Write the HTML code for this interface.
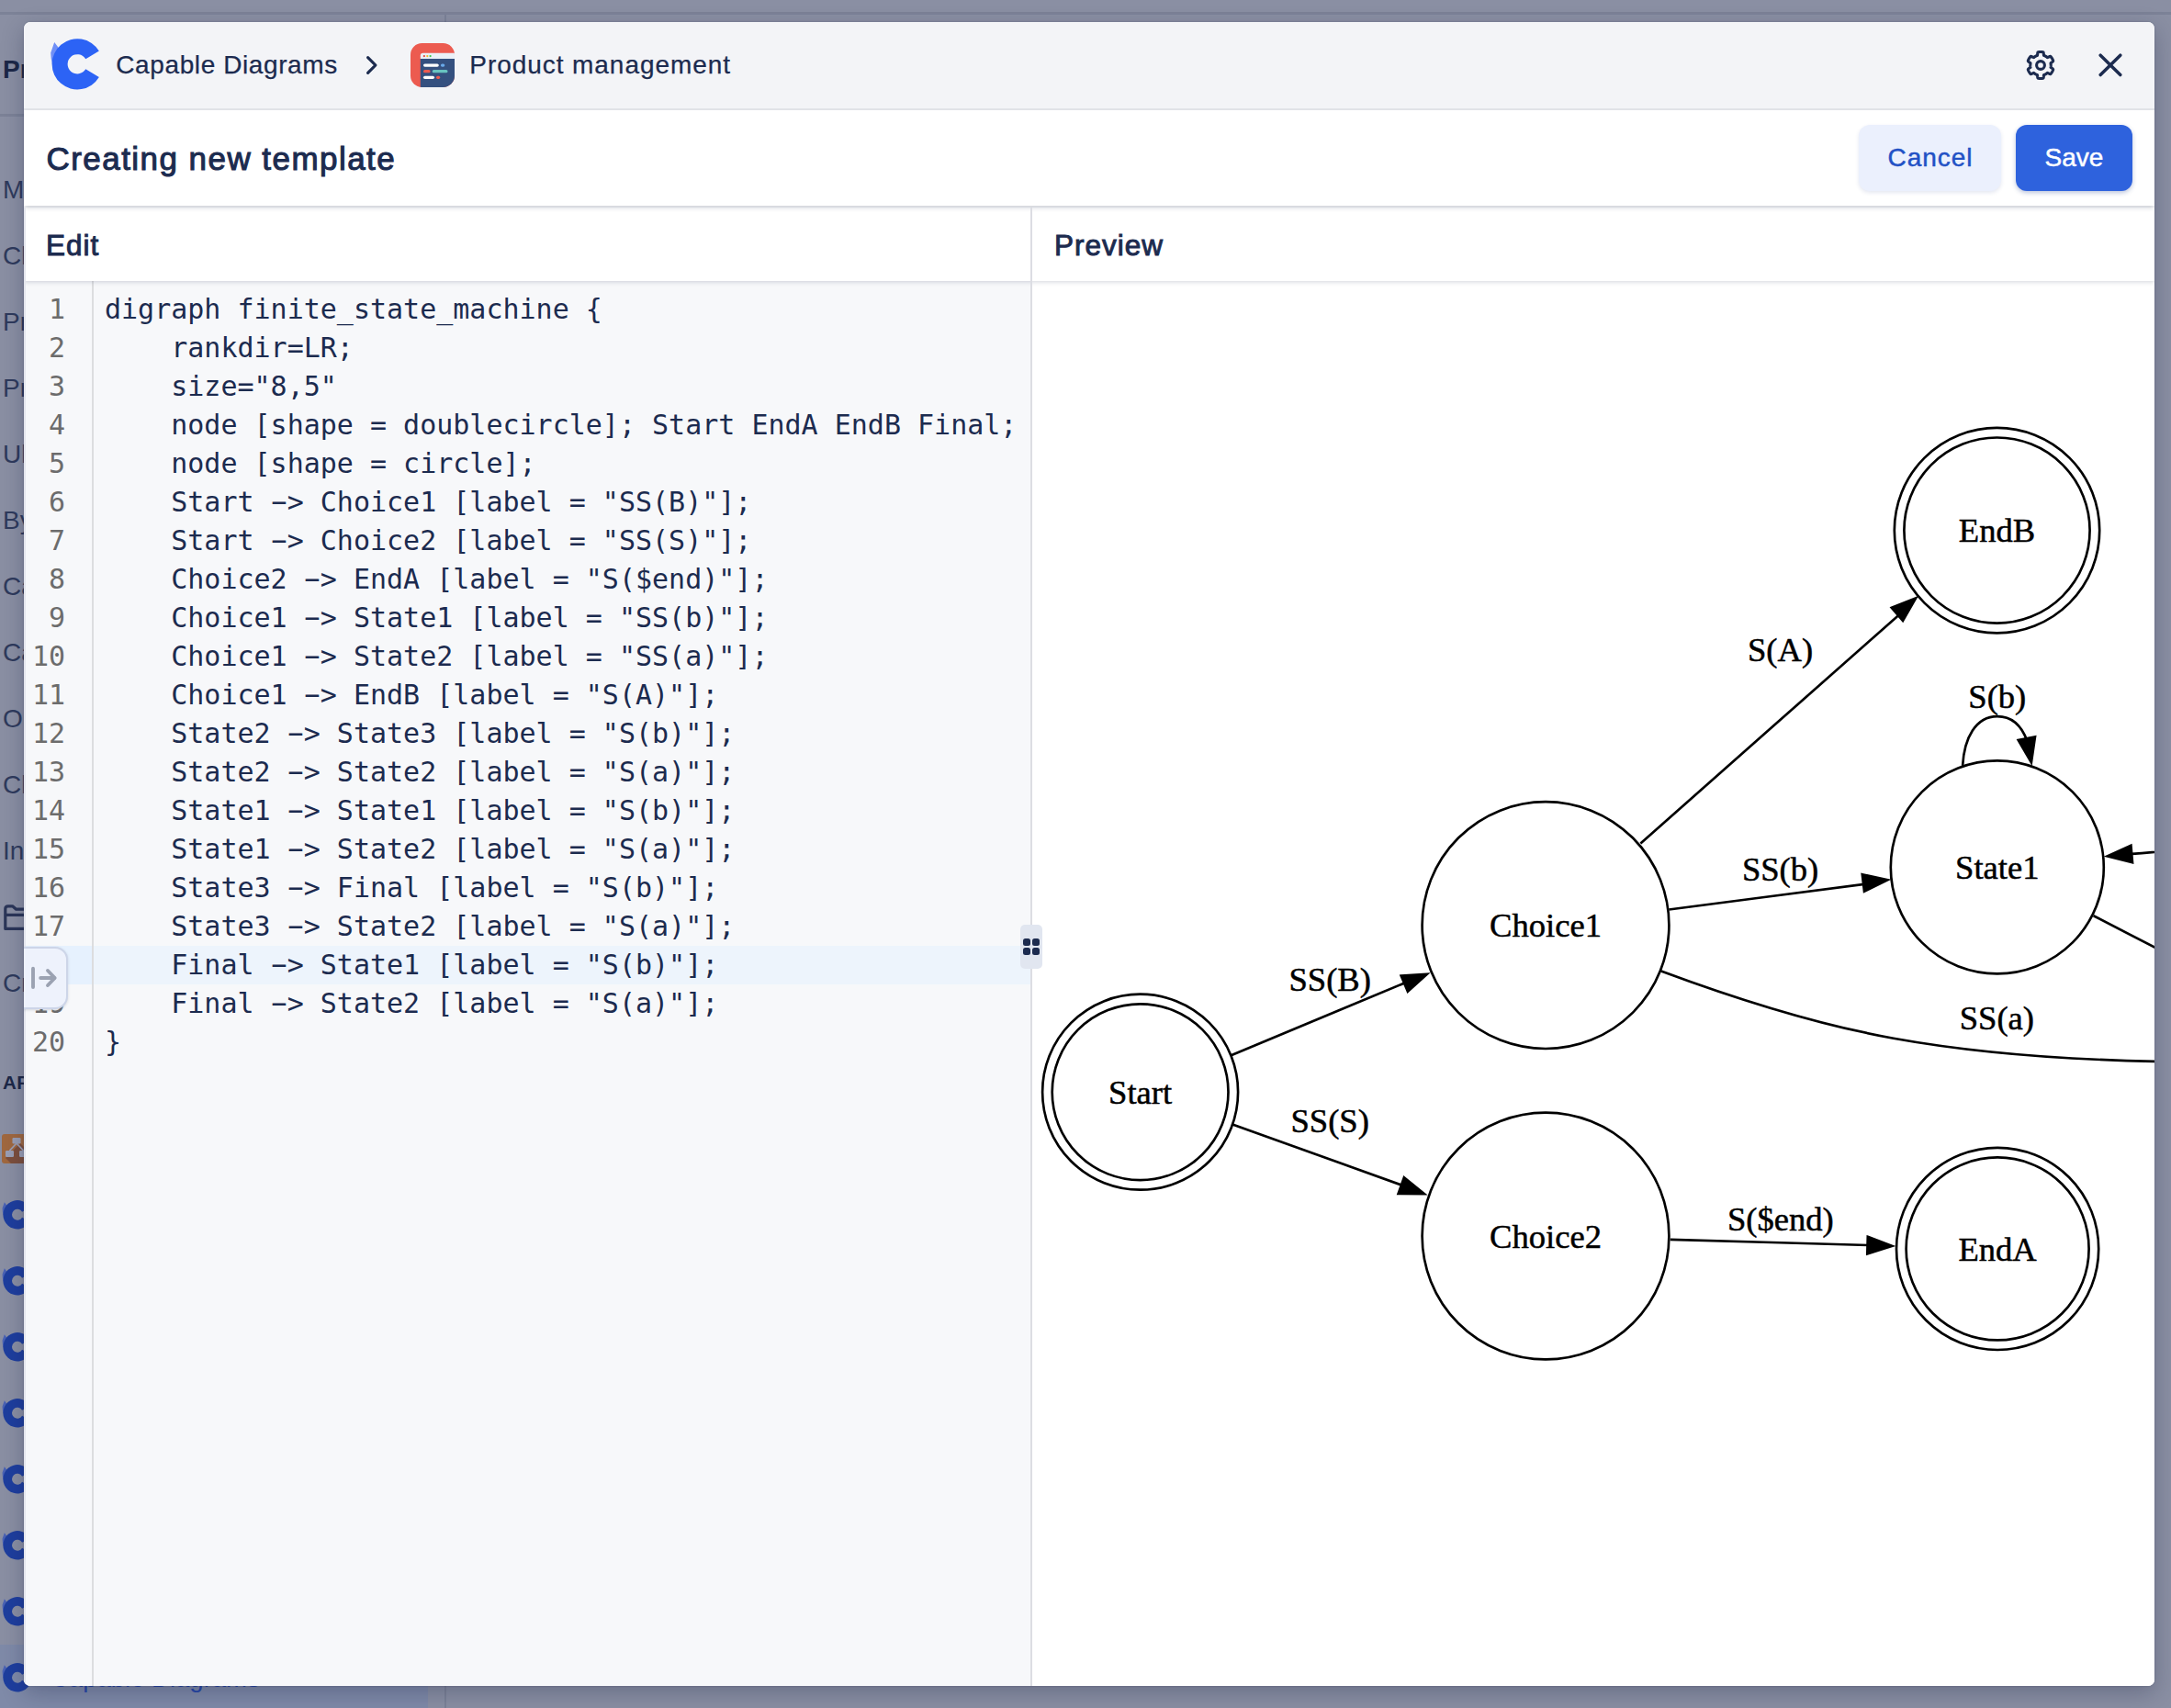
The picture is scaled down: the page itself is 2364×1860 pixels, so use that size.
<!DOCTYPE html>
<html lang="en">
<head>
<meta charset="utf-8">
<title>Capable Diagrams - Creating new template</title>
<style>
*{box-sizing:border-box;margin:0;padding:0}
html,body{width:2364px;height:1860px;overflow:hidden}
body{background:#8a8fa3;font-family:"Liberation Sans",sans-serif;color:#1c2b4f;position:relative}
.abs{position:absolute}
/* background (dimmed page) */
.bgline{position:absolute;background:#7c8297}
.side{position:absolute;left:3px;font-size:28px;color:#2e3a5c;white-space:nowrap;line-height:40px}
.side.b{font-weight:bold;color:#1c2747}
/* modal */
#modal{position:absolute;left:26px;top:24px;width:2320px;height:1812px;border-radius:7px;background:#fff;overflow:hidden;box-shadow:0 8px 24px rgba(20,30,60,.28),0 0 2px rgba(20,30,60,.3)}
#hdr{position:absolute;left:0;top:0;width:100%;height:96px;background:#f3f4f7;border-bottom:2px solid #e2e4e9}
#hdr .t{position:absolute;top:28px;font-size:28px;line-height:36px;color:#1c2b4f;white-space:nowrap;-webkit-text-stroke:.25px #1c2b4f}
#titlebar{position:absolute;left:0;top:96px;width:100%;height:104px;background:#fff;box-shadow:0 3px 5px -1px rgba(30,40,70,.2);z-index:3}
#titlebar h1{position:absolute;left:24.5px;top:30.7px;font-size:35px;line-height:44px;font-weight:normal;-webkit-text-stroke:1.05px #1c2b4f;color:#1c2b4f;white-space:nowrap;letter-spacing:1.45px}
.btn{position:absolute;top:16px;height:72px;border-radius:12px;font-size:28px;line-height:72px;text-align:center;-webkit-text-stroke:.45px currentColor}
#cancel{left:1998px;width:155px;letter-spacing:1px;text-indent:1px;background:#ebf0fd;color:#2251c5;box-shadow:0 2px 4px rgba(30,60,140,.12)}
#save{left:2169px;width:127px;background:#2e62dd;color:#fff;box-shadow:0 2px 5px rgba(30,60,140,.3)}
#panes{position:absolute;left:0;top:202px;width:100%;height:80px;background:#fff;box-shadow:0 1px 5px rgba(30,40,70,.2);z-index:2}
#panes .h{position:absolute;top:20.5px;font-size:31.5px;line-height:40px;font-weight:normal;-webkit-text-stroke:.95px #1c2b4f;letter-spacing:1px;color:#1c2b4f}
#editor{position:absolute;left:0;top:282px;width:1096px;height:1530px;background:#f7f8fa}
#gutter{position:absolute;left:0;top:0;width:76px;height:100%;border-right:2px solid #dcdddf}
#hl{position:absolute;left:0;top:724px;width:1096px;height:42px;background:#edf4fc}
#hlg{position:absolute;left:0;top:724px;width:74px;height:42px;background:#e6f1fe}
pre{font-family:"DejaVu Sans Mono","Liberation Mono",monospace;font-size:30px;line-height:42px}
.hy{display:inline-block;transform:translateY(-1.5px) scaleX(1.9)}
#nums{position:absolute;left:0;top:10px;width:45px;text-align:right;color:#6c6c6c}
#code{position:absolute;left:88px;top:10px;color:#1c2b4f}
#divider{position:absolute;left:1096px;top:202px;width:2px;height:1610px;background:#dcdde3;z-index:4}
#handle{position:absolute;left:1085px;top:983px;width:24px;height:48px;border-radius:5px;background:#e1e6f0;z-index:5}
#handle i{position:absolute;width:8px;height:8px;border-radius:2.5px;background:#1c2b4f}
#tab{position:absolute;left:-2px;top:1006.8px;width:49.7px;height:68px;border:2px solid #cdd5e8;border-radius:0 14px 14px 0;background:#eef2fc;z-index:6;box-shadow:0 1px 3px rgba(30,40,70,.15)}
#preview{position:absolute;left:1098px;top:282px;width:1222px;height:1530px;background:#fff;overflow:hidden}
</style>
</head>
<body>
<!-- dimmed background page -->
<div class="bgline" style="left:0;top:13px;width:2364px;height:3px"></div>
<div class="bgline" style="left:0;top:124px;width:30px;height:3px"></div>
<div class="bgline" style="left:484px;top:16px;width:2px;height:20px"></div>
<div class="abs" style="left:0;top:1791px;width:466px;height:69px;background:#7f8aa8"></div>
<div class="bgline" style="left:484px;top:1836px;width:2px;height:24px"></div>
<svg class="abs" style="left:3.3px;top:1307.0px;overflow:visible" width="34" height="34" viewBox="0 0 60 60"><path d="M3.2,4.1 L7.4,9.4 L9,13 L5,19 L2.5,24 L1.2,29 L-0.3,22 L-0.8,15.6 Z" fill="#4a62b4"/><path d="M51.86,42.02A27.6,27.6 0 1 1 51.86,13.58L37.29,22.34A10.6,10.6 0 1 0 37.29,33.26Z" fill="#1e3e9e"/></svg>
<svg class="abs" style="left:3.3px;top:1379.0px;overflow:visible" width="34" height="34" viewBox="0 0 60 60"><path d="M3.2,4.1 L7.4,9.4 L9,13 L5,19 L2.5,24 L1.2,29 L-0.3,22 L-0.8,15.6 Z" fill="#4a62b4"/><path d="M51.86,42.02A27.6,27.6 0 1 1 51.86,13.58L37.29,22.34A10.6,10.6 0 1 0 37.29,33.26Z" fill="#1e3e9e"/></svg>
<svg class="abs" style="left:3.3px;top:1451.0px;overflow:visible" width="34" height="34" viewBox="0 0 60 60"><path d="M3.2,4.1 L7.4,9.4 L9,13 L5,19 L2.5,24 L1.2,29 L-0.3,22 L-0.8,15.6 Z" fill="#4a62b4"/><path d="M51.86,42.02A27.6,27.6 0 1 1 51.86,13.58L37.29,22.34A10.6,10.6 0 1 0 37.29,33.26Z" fill="#1e3e9e"/></svg>
<svg class="abs" style="left:3.3px;top:1523.0px;overflow:visible" width="34" height="34" viewBox="0 0 60 60"><path d="M3.2,4.1 L7.4,9.4 L9,13 L5,19 L2.5,24 L1.2,29 L-0.3,22 L-0.8,15.6 Z" fill="#4a62b4"/><path d="M51.86,42.02A27.6,27.6 0 1 1 51.86,13.58L37.29,22.34A10.6,10.6 0 1 0 37.29,33.26Z" fill="#1e3e9e"/></svg>
<svg class="abs" style="left:3.3px;top:1595.0px;overflow:visible" width="34" height="34" viewBox="0 0 60 60"><path d="M3.2,4.1 L7.4,9.4 L9,13 L5,19 L2.5,24 L1.2,29 L-0.3,22 L-0.8,15.6 Z" fill="#4a62b4"/><path d="M51.86,42.02A27.6,27.6 0 1 1 51.86,13.58L37.29,22.34A10.6,10.6 0 1 0 37.29,33.26Z" fill="#1e3e9e"/></svg>
<svg class="abs" style="left:3.3px;top:1667.0px;overflow:visible" width="34" height="34" viewBox="0 0 60 60"><path d="M3.2,4.1 L7.4,9.4 L9,13 L5,19 L2.5,24 L1.2,29 L-0.3,22 L-0.8,15.6 Z" fill="#4a62b4"/><path d="M51.86,42.02A27.6,27.6 0 1 1 51.86,13.58L37.29,22.34A10.6,10.6 0 1 0 37.29,33.26Z" fill="#1e3e9e"/></svg>
<svg class="abs" style="left:3.3px;top:1739.0px;overflow:visible" width="34" height="34" viewBox="0 0 60 60"><path d="M3.2,4.1 L7.4,9.4 L9,13 L5,19 L2.5,24 L1.2,29 L-0.3,22 L-0.8,15.6 Z" fill="#4a62b4"/><path d="M51.86,42.02A27.6,27.6 0 1 1 51.86,13.58L37.29,22.34A10.6,10.6 0 1 0 37.29,33.26Z" fill="#1e3e9e"/></svg>
<svg class="abs" style="left:3.3px;top:1811.0px;overflow:visible" width="34" height="34" viewBox="0 0 60 60"><path d="M3.2,4.1 L7.4,9.4 L9,13 L5,19 L2.5,24 L1.2,29 L-0.3,22 L-0.8,15.6 Z" fill="#4a62b4"/><path d="M51.86,42.02A27.6,27.6 0 1 1 51.86,13.58L37.29,22.34A10.6,10.6 0 1 0 37.29,33.26Z" fill="#1e3e9e"/></svg>
<svg class="abs" style="left:0;top:980px" width="40" height="40" viewBox="0 980 40 40" fill="none" stroke="#2a3558" stroke-width="3.2" stroke-linejoin="round"><path d="M5.8,1011.4 L5.8,989.8 Q5.8,986.8 8.8,986.8 L13.6,986.8 L17.6,990.2 L34,990.2 L34,1011.4 Z M5.8,996.3 L34,996.3"/></svg>
<div class="abs" style="left:2px;top:1235px;width:34px;height:32px;border-radius:3px;background:#a0683f;overflow:hidden"><svg width="34" height="32" viewBox="0 0 34 32"><path d="M4,26 L12,18 L20,10 L34,24 L34,32 L10,32Z" fill="#7d4f3c"/><g fill="#9a9fb5"><rect x="11.5" y="4" width="9" height="6.5" rx="1.2"/><rect x="4" y="18" width="9" height="7" rx="1.2"/><rect x="19" y="18" width="9" height="7" rx="1.2"/></g><path d="M16,10 L8.5,18 M16,10 L23.5,18" stroke="#9a9fb5" stroke-width="1.8" fill="none"/></svg></div>
<div class="side b" style="top:56px">Pr</div>
<div class="side" style="top:187px">M</div>
<div class="side" style="top:259px">Cl</div>
<div class="side" style="top:331px">Pr</div>
<div class="side" style="top:403px">Pr</div>
<div class="side" style="top:475px">Ul</div>
<div class="side" style="top:547px">By</div>
<div class="side" style="top:619px">Ca</div>
<div class="side" style="top:691px">Ca</div>
<div class="side" style="top:763px">Ou</div>
<div class="side" style="top:835px">Cl</div>
<div class="side" style="top:907px">In</div>
<div class="side" style="top:1051px">Cr</div>
<div class="side b" style="top:1158.5px;font-size:20.5px;left:3px;letter-spacing:.5px">AP</div>
<div class="side" style="top:1807.5px;left:55px;color:#2747a8;font-size:27.5px">Capable Diagrams</div>

<div id="modal">
  <div id="hdr">
    <svg class="abs" style="left:30px;top:18px;overflow:visible" width="60" height="60" viewBox="0 0 60 60"><path d="M3.2,4.1 L7.4,9.4 L9,13 L5,19 L2.5,24 L1.2,29 L-0.3,22 L-0.8,15.6 Z" fill="#6f8ff6"/><path d="M51.86,42.02A27.6,27.6 0 1 1 51.86,13.58L37.29,22.34A10.6,10.6 0 1 0 37.29,33.26Z" fill="#2c63f5"/></svg>
    <svg class="abs" style="left:366px;top:30px" width="24" height="34" viewBox="366 30 24 34"><polyline points="374.6,38.6 382.9,47 374.6,55.4" fill="none" stroke="#1c2b4f" stroke-width="3.2" stroke-linecap="round" stroke-linejoin="round"/></svg>
    <svg class="abs" style="left:421px;top:23px" width="48" height="48" viewBox="0 0 48 48"><defs><clipPath id="pc"><rect width="48" height="48" rx="12.5"/></clipPath></defs><g clip-path="url(#pc)"><rect width="48" height="48" fill="#ec5b50"/><path d="M10.8,13.6 Q10.8,10.8 13.6,10.8 L48,10.8 L48,17 L10.8,17Z" fill="#eaf0f7"/><rect x="10.8" y="17" width="38" height="32" fill="#34507f"/><circle cx="14.9" cy="14.1" r="1.15" fill="#e8453c"/><circle cx="18.3" cy="14.1" r="1.15" fill="#f5b62d"/><circle cx="21.6" cy="14.1" r="1.15" fill="#3ec64a"/><g stroke-linecap="round" stroke-width="3.2"><line x1="15.6" y1="24.1" x2="29.2" y2="24.1" stroke="#fff"/><line x1="34.5" y1="24.1" x2="35.7" y2="24.1" stroke="#6aa9e9"/><line x1="15.6" y1="30.7" x2="20" y2="30.7" stroke="#ec5b50"/><line x1="25.3" y1="30.7" x2="38.9" y2="30.7" stroke="#67c3c0"/><line x1="15.6" y1="37.3" x2="24.4" y2="37.3" stroke="#fff"/><line x1="29.6" y1="37.3" x2="30.6" y2="37.3" stroke="#ec5b50"/></g></g></svg>
    <svg class="abs" style="left:2179.9px;top:30.95px" width="32" height="32" viewBox="0 0 32 32" fill="none" stroke="#1c2b4f" stroke-width="3.1" stroke-linejoin="round"><path d="M27.20,16.00L27.20,15.71L27.18,15.41L27.17,15.12L27.14,14.83L27.10,14.54L27.06,14.25L27.01,13.96L27.07,13.65L27.60,13.21L28.41,12.67L29.20,12.09L29.68,11.56L29.67,11.16L29.54,10.80L29.40,10.45L29.25,10.10L29.09,9.76L28.92,9.42L28.74,9.08L28.56,8.75L28.36,8.42L28.16,8.10L27.95,7.79L27.73,7.48L27.50,7.17L27.27,6.87L27.03,6.58L26.69,6.38L25.99,6.52L25.09,6.91L24.21,7.35L23.57,7.59L23.27,7.48L23.05,7.30L22.82,7.11L22.58,6.94L22.34,6.77L22.10,6.61L21.85,6.45L21.60,6.30L21.34,6.16L21.08,6.02L20.82,5.89L20.56,5.77L20.29,5.65L20.01,5.54L19.74,5.44L19.50,5.24L19.39,4.56L19.33,3.59L19.21,2.61L18.99,1.93L18.64,1.74L18.27,1.68L17.89,1.62L17.52,1.58L17.14,1.54L16.76,1.52L16.38,1.50L16.00,1.50L15.62,1.50L15.24,1.52L14.86,1.54L14.48,1.58L14.11,1.62L13.73,1.68L13.36,1.74L13.01,1.93L12.79,2.61L12.67,3.59L12.61,4.56L12.50,5.24L12.26,5.44L11.99,5.54L11.71,5.65L11.44,5.77L11.18,5.89L10.92,6.02L10.66,6.16L10.40,6.30L10.15,6.45L9.90,6.61L9.66,6.77L9.42,6.94L9.18,7.11L8.95,7.30L8.73,7.48L8.43,7.59L7.79,7.35L6.91,6.91L6.01,6.52L5.31,6.38L4.97,6.58L4.73,6.87L4.50,7.17L4.27,7.48L4.05,7.79L3.84,8.10L3.64,8.42L3.44,8.75L3.26,9.08L3.08,9.42L2.91,9.76L2.75,10.10L2.60,10.45L2.46,10.80L2.33,11.16L2.32,11.56L2.80,12.09L3.59,12.67L4.40,13.21L4.93,13.65L4.99,13.96L4.94,14.25L4.90,14.54L4.86,14.83L4.83,15.12L4.82,15.41L4.80,15.71L4.80,16.00L4.80,16.29L4.82,16.59L4.83,16.88L4.86,17.17L4.90,17.46L4.94,17.75L4.99,18.04L4.93,18.35L4.40,18.79L3.59,19.33L2.80,19.91L2.32,20.44L2.33,20.84L2.46,21.20L2.60,21.55L2.75,21.90L2.91,22.24L3.08,22.58L3.26,22.92L3.44,23.25L3.64,23.58L3.84,23.90L4.05,24.21L4.27,24.52L4.50,24.83L4.73,25.13L4.97,25.42L5.31,25.62L6.01,25.48L6.91,25.09L7.79,24.65L8.43,24.41L8.73,24.52L8.95,24.70L9.18,24.89L9.42,25.06L9.66,25.23L9.90,25.39L10.15,25.55L10.40,25.70L10.66,25.84L10.92,25.98L11.18,26.11L11.44,26.23L11.71,26.35L11.99,26.46L12.26,26.56L12.50,26.76L12.61,27.44L12.67,28.41L12.79,29.39L13.01,30.07L13.36,30.26L13.73,30.32L14.11,30.38L14.48,30.42L14.86,30.46L15.24,30.48L15.62,30.50L16.00,30.50L16.38,30.50L16.76,30.48L17.14,30.46L17.52,30.42L17.89,30.38L18.27,30.32L18.64,30.26L18.99,30.07L19.21,29.39L19.33,28.41L19.39,27.44L19.50,26.76L19.74,26.56L20.01,26.46L20.29,26.35L20.56,26.23L20.82,26.11L21.08,25.98L21.34,25.84L21.60,25.70L21.85,25.55L22.10,25.39L22.34,25.23L22.58,25.06L22.82,24.89L23.05,24.70L23.27,24.52L23.57,24.41L24.21,24.65L25.09,25.09L25.99,25.48L26.69,25.62L27.03,25.42L27.27,25.13L27.50,24.83L27.73,24.52L27.95,24.21L28.16,23.90L28.36,23.58L28.56,23.25L28.74,22.92L28.92,22.58L29.09,22.24L29.25,21.90L29.40,21.55L29.54,21.20L29.67,20.84L29.68,20.44L29.20,19.91L28.41,19.33L27.60,18.79L27.07,18.35L27.01,18.04L27.06,17.75L27.10,17.46L27.14,17.17L27.17,16.88L27.18,16.59L27.20,16.29Z"/><circle cx="16" cy="16" r="4.4"/></svg>
    <svg class="abs" style="left:2252px;top:27px" width="40" height="40" viewBox="2252 27 40 40"><path d="M2261.2,36.2 L2282.8,57.6 M2282.8,36.2 L2261.2,57.6" fill="none" stroke="#1c2b4f" stroke-width="3.5" stroke-linecap="round"/></svg>
    <div class="t" style="left:100.3px;top:28.8px;letter-spacing:.6px">Capable Diagrams</div>
    <div class="t" style="left:485.3px;top:28.8px;letter-spacing:.94px">Product management</div>
  </div>
  <div id="titlebar">
    <h1>Creating new template</h1>
    <div class="btn" id="cancel">Cancel</div>
    <div class="btn" id="save">Save</div>
  </div>
  <div id="panes">
    <div class="h" style="left:24px">Edit</div>
    <div class="h" style="left:1122px">Preview</div>
  </div>
  <div id="editor">
    <div id="hl"></div>
    <div id="gutter"><div id="hlg"></div></div>
<pre id="nums">1
2
3
4
5
6
7
8
9
10
11
12
13
14
15
16
17
18
19
20</pre>
<pre id="code">digraph finite_state_machine {
    rankdir=LR;
    size="8,5"
    node [shape = doublecircle]; Start EndA EndB Final;
    node [shape = circle];
    Start <span class="hy">-</span>&gt; Choice1 [label = "SS(B)"];
    Start <span class="hy">-</span>&gt; Choice2 [label = "SS(S)"];
    Choice2 <span class="hy">-</span>&gt; EndA [label = "S($end)"];
    Choice1 <span class="hy">-</span>&gt; State1 [label = "SS(b)"];
    Choice1 <span class="hy">-</span>&gt; State2 [label = "SS(a)"];
    Choice1 <span class="hy">-</span>&gt; EndB [label = "S(A)"];
    State2 <span class="hy">-</span>&gt; State3 [label = "S(b)"];
    State2 <span class="hy">-</span>&gt; State2 [label = "S(a)"];
    State1 <span class="hy">-</span>&gt; State1 [label = "S(b)"];
    State1 <span class="hy">-</span>&gt; State2 [label = "S(a)"];
    State3 <span class="hy">-</span>&gt; Final [label = "S(b)"];
    State3 <span class="hy">-</span>&gt; State2 [label = "S(a)"];
    Final <span class="hy">-</span>&gt; State1 [label = "S(b)"];
    Final <span class="hy">-</span>&gt; State2 [label = "S(a)"];
}</pre>
  </div>
  <div class="abs" style="left:0;top:202px;width:2px;height:1610px;background:#e4e6ed;z-index:4"></div>
  <div id="divider"></div>
  <div id="handle"><i style="left:3px;top:15px"></i><i style="left:13px;top:15px"></i><i style="left:3px;top:25px"></i><i style="left:13px;top:25px"></i></div>
  <div id="tab"></div>
  <svg class="abs" style="left:0;top:1020px;z-index:7" width="48" height="44" viewBox="0 1020 48 44" fill="none" stroke="#9ba2b2" stroke-width="3.9" stroke-linecap="round" stroke-linejoin="round"><line x1="10" y1="1030.8" x2="10" y2="1051"/><line x1="18.2" y1="1041" x2="33" y2="1041"/><polyline points="26,1033 33.7,1041 26,1049"/></svg>
  <div id="preview"><svg width="1222" height="1530" viewBox="0 0 1222 1530" style="position:absolute;left:0;top:0" font-family="'Liberation Serif','Times New Roman',Times,serif" font-size="36.60" fill="none" stroke="#000" stroke-width="2.667"><style>.t{fill:#000;stroke:#000;stroke-width:.5px}</style>
<circle cx="117.6" cy="883.2" r="106.5"/>
<circle cx="117.6" cy="883.2" r="95.9"/>
<text x="117.6" y="896.0" text-anchor="middle" class="t">Start</text>
<circle cx="559.0" cy="701.6" r="134.4"/>
<text x="559.0" y="714.4" text-anchor="middle" class="t">Choice1</text>
<circle cx="559.0" cy="1040.0" r="134.4"/>
<text x="559.0" y="1052.8" text-anchor="middle" class="t">Choice2</text>
<circle cx="1051.1" cy="1053.9" r="110.1"/>
<circle cx="1051.1" cy="1053.9" r="99.5"/>
<text x="1051.1" y="1066.7" text-anchor="middle" class="t">EndA</text>
<circle cx="1050.5" cy="271.6" r="111.7"/>
<circle cx="1050.5" cy="271.6" r="101.1"/>
<text x="1050.5" y="284.4" text-anchor="middle" class="t">EndB</text>
<circle cx="2263.0" cy="693.7" r="105.6"/>
<circle cx="2263.0" cy="693.7" r="94.9"/>
<text x="2263.0" y="706.5" text-anchor="middle" class="t">Final</text>
<circle cx="1050.8" cy="638.4" r="116.0"/>
<text x="1050.8" y="651.2" text-anchor="middle" class="t">State1</text>
<circle cx="1456.7" cy="845.7" r="116.6"/>
<text x="1456.7" y="858.5" text-anchor="middle" class="t">State2</text>
<circle cx="1865.2" cy="907.1" r="116.6"/>
<text x="1865.2" y="919.9" text-anchor="middle" class="t">State3</text>
<path d="M216.0,843.4C272.8,819.6 346.2,789.1 410.2,762.5"/>
<polygon fill="#000" points="401.7,756.6 429.9,754.9 408.9,773.8 401.7,756.6"/>
<text x="324.2" y="772.9" text-anchor="middle" class="t">SS(B)</text>
<path d="M218.1,918.4C273.7,938.4 344.5,963.8 407.0,986.3"/>
<polygon fill="#000" points="404.9,976.3 426.9,994.1 398.6,993.9 404.9,976.3"/>
<text x="324.2" y="926.9" text-anchor="middle" class="t">SS(S)</text>
<path d="M2158.2,678.1C2024.2,658.6 1781.7,626.1 1573.0,614.1 1469.8,608.2 1443.7,609.9 1340.4,614.2 1292.6,616.3 1240.5,620.1 1193.9,624.2"/>
<polygon fill="#000" points="1198.0,633.3 1170.7,626.4 1196.4,614.7 1198.0,633.3"/>
<text x="1661.0" y="610.0" text-anchor="middle" class="t">S(b)</text>
<path d="M2157.8,704.2C2054.0,715.7 1889.4,736.6 1749.0,765.7 1698.1,776.3 1643.0,790.7 1594.7,804.5"/>
<polygon fill="#000" points="1600.1,812.6 1571.9,811.0 1595.0,794.6 1600.1,812.6"/>
<text x="1865.2" y="719.0" text-anchor="middle" class="t">S(a)</text>
<path d="M662.4,612.5C745.2,539.2 862.1,435.9 945.4,362.2"/>
<polygon fill="#000" points="935.8,355.8 962.1,345.5 948.0,369.9 935.8,355.8"/>
<text x="814.5" y="414.4" text-anchor="middle" class="t">S(A)</text>
<path d="M693.3,684.5C760.4,675.8 841.9,665.2 909.9,656.4"/>
<polygon fill="#000" points="903.8,646.2 931.4,652.3 906.0,664.7 903.8,646.2"/>
<text x="814.6" y="652.5" text-anchor="middle" class="t">SS(b)</text>
<path d="M684.8,751.4C757.2,778.3 851.3,809.1 937.9,824.7 1063.4,847.4 1208.8,851.3 1313.3,850.4"/>
<polygon fill="#000" points="1309.3,840.2 1336.0,849.4 1309.4,858.9 1309.3,840.2"/>
<text x="1050.4" y="814.7" text-anchor="middle" class="t">SS(a)</text>
<path d="M694.7,1043.8C763.0,1045.8 846.1,1048.1 914.6,1050.1"/>
<polygon fill="#000" points="909.8,1040.8 936.3,1050.8 909.3,1059.5 909.8,1040.8"/>
<text x="814.8" y="1033.6" text-anchor="middle" class="t">S($end)</text>
<path d="M1013.1,527.8C1014.9,497.4 1027.5,474.1 1050.8,474.1 1066.5,474.1 1077.4,484.6 1083.3,500.7"/>
<polygon fill="#000" points="1092.0,496.4 1087.9,524.4 1073.7,500.0 1092.0,496.4"/>
<text x="1050.8" y="464.7" text-anchor="middle" class="t">S(b)</text>
<path d="M1155.6,691.2C1208.3,718.5 1273.0,752.0 1328.7,780.9"/>
<polygon fill="#000" points="1330.3,771.0 1349.7,791.5 1321.7,787.5 1330.3,771.0"/>
<text x="1253.8" y="716.7" text-anchor="middle" class="t">S(a)</text>
<path d="M1418.9,735.2C1420.7,704.7 1433.3,681.5 1456.7,681.5 1472.4,681.5 1483.2,692.0 1489.2,708.1"/>
<polygon fill="#000" points="1497.9,703.8 1493.8,731.7 1479.5,707.3 1497.9,703.8"/>
<text x="1456.7" y="672.1" text-anchor="middle" class="t">S(a)</text>
<path d="M1572.8,863.0C1619.5,870.1 1674.2,878.4 1723.4,885.9"/>
<polygon fill="#000" points="1721.6,876.2 1746.6,889.4 1718.8,894.6 1721.6,876.2"/>
<text x="1661.0" y="860.4" text-anchor="middle" class="t">S(b)</text>
<path d="M1969.0,852.1C2022.8,822.9 2089.2,786.8 2145.0,756.4"/>
<polygon fill="#000" points="2138.0,749.6 2165.9,745.1 2147.0,766.0 2138.0,749.6"/>
<text x="2069.5" y="772.4" text-anchor="middle" class="t">S(b)</text>
<path d="M1752.0,935.7C1710.4,942.3 1663.1,944.5 1621.0,933.7 1607.4,930.3 1593.7,925.4 1580.4,919.7"/>
<polygon fill="#000" points="1578.6,929.2 1558.4,909.5 1586.5,912.3 1578.6,929.2"/>
<text x="1661.0" y="924.4" text-anchor="middle" class="t">S(a)</text>
</svg></div>
</div>
</body>
</html>
